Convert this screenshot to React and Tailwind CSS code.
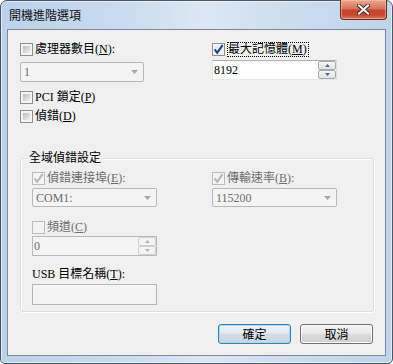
import React from "react";

function CheckBox({ checked, disabled }) {
  return (
    <span
      className={
        disabled
          ? "relative flex w-[13px] h-[13px] shrink-0 border border-[#bcbcbc] bg-[#f4f4f4] p-[2px]"
          : "relative flex w-[13px] h-[13px] shrink-0 border border-[#8e8f8f] bg-[#f4f4f4] p-[2px]"
      }
    >
      <span
        className={
          disabled
            ? "flex-1 bg-[#f4f4f4]"
            : checked
            ? "flex-1 bg-[linear-gradient(135deg,#d7e4f1,#f7f9fc)]"
            : "flex-1 bg-[linear-gradient(135deg,#b6bbc1,#f0f0f1)]"
        }
      />
      {checked && (
        <svg className="absolute left-0 top-0" width="11" height="11" viewBox="0 0 11 11">
          <path
            d="M1.6 5.4 L4.2 8.8 L9.6 1.2"
            fill="none"
            stroke={disabled ? "#b7b7b7" : "#23418a"}
            strokeWidth="2.1"
          />
        </svg>
      )}
    </span>
  );
}

function Combo({ value, cls }) {
  return (
    <div
      className={
        "flex items-center justify-between rounded-[2px] border border-[#b8b8b8] bg-[#f4f4f4] pl-[3px] pr-[5px] text-[12px] leading-[14px] text-[#6d6d6d] " +
        cls
      }
    >
      <span>{value}</span>
      <svg width="7" height="4" viewBox="0 0 7 4">
        <path d="M0 0H7L3.5 4Z" fill="#a6a6a6" />
      </svg>
    </div>
  );
}

function Arrow({ up, color }) {
  return (
    <svg width="5" height="3" viewBox="0 0 5 3">
      <path d={up ? "M0 3H5L2.5 0Z" : "M0 0H5L2.5 3Z"} fill={color} />
    </svg>
  );
}

function Spin({ value, disabled, cls }) {
  const arrow = disabled ? "#b3b3b3" : "#4f6690";
  return (
    <div
      className={
        disabled
          ? "flex border border-[#b8b8b8] bg-[#f4f4f4] text-[#6d6d6d] text-[12px] leading-[14px] " + cls
          : "flex border border-[#abadb3] border-b-[#e3e9ef] border-l-[#e2e3ea] border-r-[#dbdfe6] bg-white text-black text-[12px] leading-[14px] " + cls
      }
    >
      <span className="flex-1 flex items-center pl-[1px]">{value}</span>
      <div className="w-[18px] flex flex-col">
        <span
          className={
            disabled
              ? "flex-1 flex items-center justify-center border border-[#cfcfcf] rounded-[2px] bg-[#f4f4f4]"
              : "flex-1 flex items-center justify-center border border-[#a9a9a9] rounded-[2px] bg-[linear-gradient(#f5f5f5,#e4e4e4)]"
          }
        >
          <Arrow up color={arrow} />
        </span>
        <span
          className={
            disabled
              ? "flex-1 flex items-center justify-center border border-[#cfcfcf] rounded-[2px] bg-[#f4f4f4]"
              : "flex-1 flex items-center justify-center border border-[#a9a9a9] rounded-[2px] bg-[linear-gradient(#f5f5f5,#e4e4e4)]"
          }
        >
          <Arrow color={arrow} />
        </span>
      </div>
    </div>
  );
}

function CheckRow({ checked, disabled, children, focus }) {
  return (
    <div className="flex items-center gap-[2px] h-[13px]">
      <CheckBox checked={checked} disabled={disabled} />
      <span
        className={
          focus
            ? "border border-dotted border-black leading-[13px] -my-[1px] pr-[1px] whitespace-nowrap text-black"
            : disabled
            ? "leading-[13px] whitespace-nowrap text-[#6d6d6d]"
            : "leading-[13px] whitespace-nowrap text-black"
        }
      >
        {children}
      </span>
    </div>
  );
}

export default function App() {
  return (
    <div className="w-[393px] h-[364px] flex flex-col rounded-t-[7px] rounded-b-[5px] border border-[#4b5663] shadow-[inset_0_0_0_1px_rgba(255,255,255,0.55)] bg-[linear-gradient(90deg,#bad2ea_0%,#c8dbef_30%,#dbe7f4_52%,#c9dbee_78%,#bed4eb_100%)] [font-family:'Liberation_Serif','Noto_Sans_CJK_TC',serif] text-[12px] text-black">
      {/* Title bar */}
      <div className="h-[28px] flex items-start justify-between pl-[8px] pr-[5px]">
        <span className="mt-[7px] leading-[14px] text-[12px] text-[#111] [font-family:'Noto_Sans_CJK_TC',sans-serif]">
          開機進階選項
        </span>
        <div className="-mt-[1px] w-[47px] h-[20px] flex items-center justify-center rounded-b-[4px] border border-[#6b2b22] border-t-0 shadow-[inset_0_0_0_1px_rgba(255,200,190,0.5)] bg-[linear-gradient(#e9a893_0%,#d8735c_45%,#c4452c_55%,#c94a30_80%,#e07a5c_100%)]">
          <svg width="13" height="11" viewBox="0 0 13 11">
            <path d="M2 1.5 L11 9.5 M11 1.5 L2 9.5" stroke="#43302c" strokeWidth="4" strokeLinecap="square" />
            <path d="M2 1.5 L11 9.5 M11 1.5 L2 9.5" stroke="#ffffff" strokeWidth="2" strokeLinecap="square" />
          </svg>
        </div>
      </div>

      {/* Client area */}
      <div className="flex-1 mx-[6px] mb-[7px] border border-[#7f8893] bg-[#f0f0f0] flex flex-col">
        {/* top section */}
        <div className="grid grid-cols-[192px_125px] pl-[12px] pt-[13px]">
          <div className="flex flex-col">
            <CheckRow>
              處理器數目(<u>N</u>):
            </CheckRow>
            <Combo value="1" cls="mt-[6px] w-[124px] h-[20px]" />
            <div className="mt-[9px]">
              <CheckRow>
                PCI 鎖定(<u>P</u>)
              </CheckRow>
            </div>
            <div className="mt-[6px]">
              <CheckRow>
                偵錯(<u>D</u>)
              </CheckRow>
            </div>
          </div>
          <div className="flex flex-col">
            <CheckRow checked focus>
              最大記憶體(<u>M</u>)
            </CheckRow>
            <Spin value="8192" cls="mt-[4px] w-[125px] h-[20px]" />
          </div>
        </div>

        {/* group */}
        <div className="relative mt-[35px] ml-[12px] w-[354px] rounded-[3px] border border-[#d5dfe5] shadow-[inset_1px_1px_0_#ffffff,1px_1px_0_#ffffff] pl-[11px] pt-[13px] pb-[6px]">
          <span className="absolute -top-[8px] left-[6px] px-[2px] bg-[#f0f0f0] leading-[14px] text-black">
            全域偵錯設定
          </span>
          <div className="grid grid-cols-[180px_125px]">
            <div className="flex flex-col">
              <CheckRow checked disabled>
                偵錯連接埠(<u>E</u>):
              </CheckRow>
              <Combo value="COM1:" cls="mt-[3px] w-[125px] h-[19px]" />
              <div className="mt-[14px]">
                <CheckRow disabled>
                  頻道(<u>C</u>)
                </CheckRow>
              </div>
              <Spin value="0" disabled cls="mt-[2px] w-[125px] h-[20px]" />
              <span className="mt-[11px] leading-[14px] text-black whitespace-nowrap">
                USB 目標名稱(<u>T</u>):
              </span>
              <div className="mt-[3px] w-[125px] h-[21px] border border-[#b5b5b5] bg-[#f4f4f4]" />
            </div>
            <div className="flex flex-col">
              <CheckRow checked disabled>
                傳輸速率(<u>B</u>):
              </CheckRow>
              <Combo value="115200" cls="mt-[3px] w-[125px] h-[19px]" />
            </div>
          </div>
        </div>

        {/* buttons */}
        <div className="flex justify-end gap-[9px] pr-[12px] mt-[12px]">
          <button className="w-[73px] h-[20px] rounded-[3px] border border-[#3c7fb1] shadow-[inset_0_0_0_1px_#9fdcf7] bg-[linear-gradient(#eef3f7,#e4ebf1_45%,#d3dde6_50%,#c7d3de)] leading-[14px] text-black [font-family:'Noto_Sans_CJK_TC',sans-serif]">
            確定
          </button>
          <button className="w-[73px] h-[20px] rounded-[3px] border border-[#707070] shadow-[inset_0_0_0_1px_#fbfbfb] bg-[linear-gradient(#f2f2f2,#ebebeb_45%,#dddddd_50%,#cfcfcf)] leading-[14px] text-black [font-family:'Noto_Sans_CJK_TC',sans-serif]">
            取消
          </button>
        </div>
      </div>
    </div>
  );
}
